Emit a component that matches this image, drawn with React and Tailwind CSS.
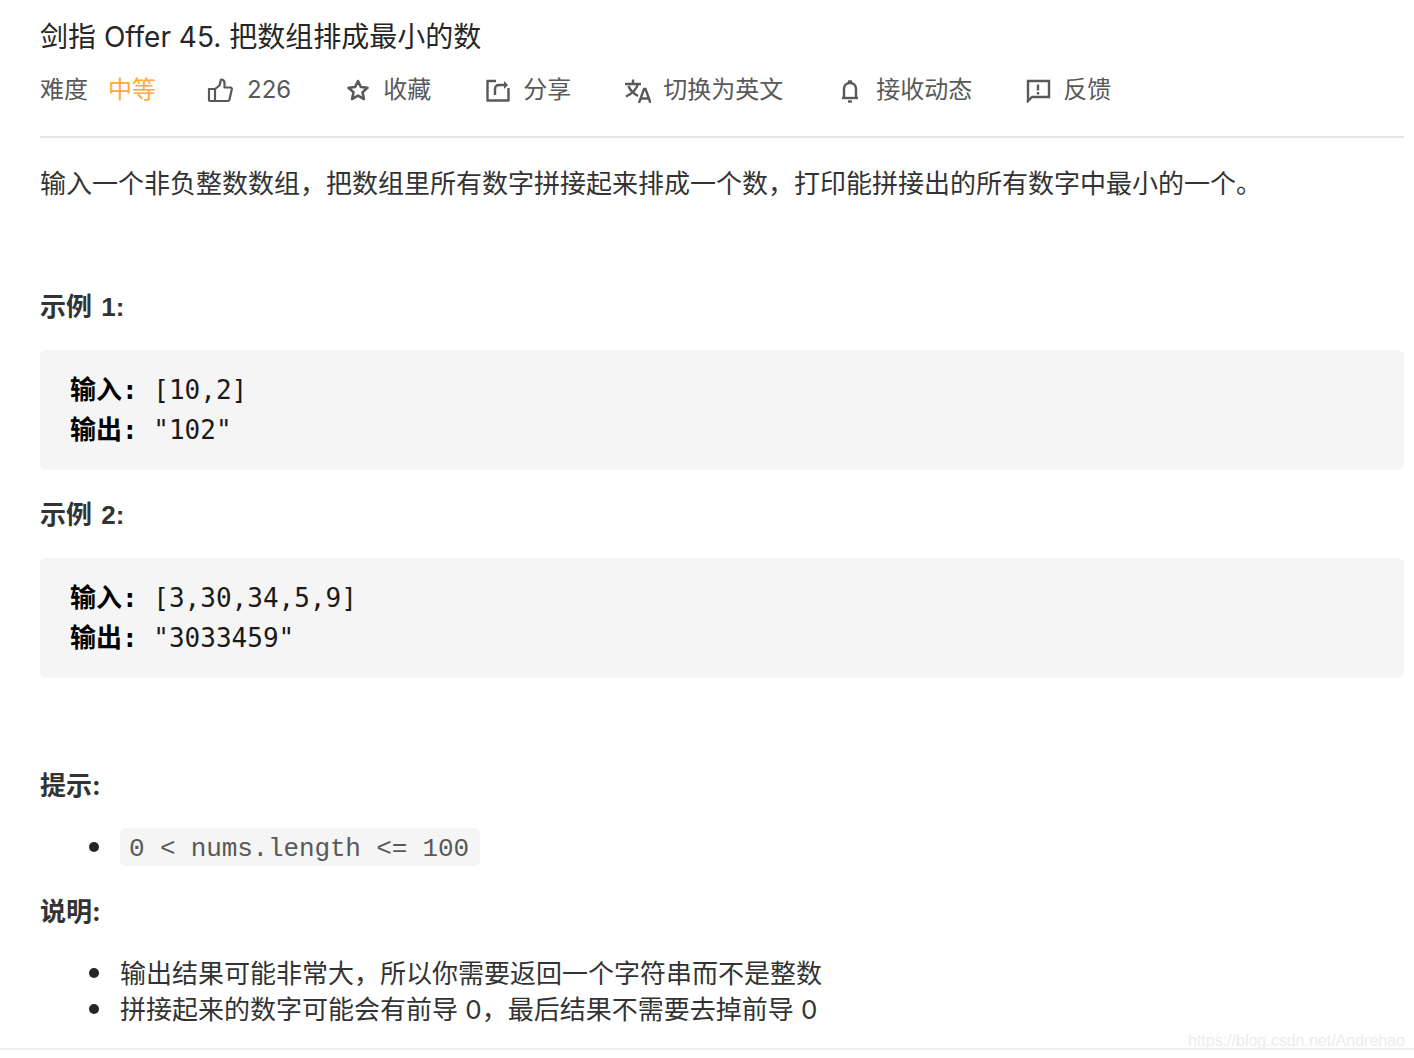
import React from 'react';

const ThumbIcon = () => (
  <svg width="26" height="26" viewBox="0 0 26 26" fill="none" stroke="#595959" strokeWidth="2.200" strokeLinejoin="round" strokeLinecap="round">
    <path d="M2 12h6v12H3a1 1 0 0 1-1-1z" />
    <path d="M8 12l4.500-3.500L14 2.500c2.200 0 3.500 1.500 3.500 3.500v4.500h6c1 0 1.500.8 1.300 1.800l-2.300 10.200c-.2 1-.9 1.500-1.800 1.500H8" />
  </svg>
);

const StarIcon = () => (
  <svg width="26" height="26" viewBox="0 0 26 26" fill="none" stroke="#595959" strokeWidth="2.600" strokeLinejoin="round">
    <path d="M13 4l2.800 6 6.700.8-5 4.500 1.400 6.700L13 18.700 7.100 22l1.400-6.700-5-4.500 6.700-.8z" />
  </svg>
);

const ShareIcon = () => (
  <svg width="26" height="26" viewBox="0 0 26 26" fill="none" stroke="#595959" strokeWidth="2.400" strokeLinejoin="round">
    <path d="M11 4H2.500v19.500h21V11" />
    <path d="M10 18v-6c0-2.500 1.500-4 4-4h6" />
    <path d="M19 4l4 4-4 4z" fill="#595959" stroke="none" />
  </svg>
);

const TranslateIcon = () => (
  <svg width="26" height="26" viewBox="0 0 26 26" fill="none" stroke="#595959" strokeWidth="2.400">
    <path d="M0 7h16M8 2.500V7M13 7c-1.500 5-5.500 9.500-12 12.500M3.500 9c1.500 4 5 7.500 9.500 10" />
    <path d="M14 26l5-14h1.500l5 14M16 21.500h9" />
  </svg>
);

const BellIcon = () => (
  <svg width="26" height="26" viewBox="0 0 26 26" fill="none" stroke="#595959" strokeWidth="2.400" strokeLinejoin="round">
    <path d="M7 20v-8c0-3.600 2.400-6 6-6s6 2.400 6 6v8" />
    <path d="M5 21h16" />
    <path d="M11 4.500h4" />
    <path d="M11 24.500h4" />
  </svg>
);

const FeedbackIcon = () => (
  <svg width="26" height="26" viewBox="0 0 26 26" fill="none" stroke="#595959" strokeWidth="2.400" strokeLinejoin="miter">
    <path d="M3 4h21v16H7l-4 4z" />
    <path d="M13 7.500v6M13 15v2.500" />
  </svg>
);

const MetaItem = ({ icon, label, className }) => (
  <div className={`flex items-center ${className}`}>
    {icon}
    <span>{label}</span>
  </div>
);

const CodeBlock = ({ input, output }) => (
  <div className="h-[120px] rounded-md bg-[#f5f5f5] pl-[30px] pt-[20px] text-[26px] text-[#1a1a1a] [font-family:'DejaVu_Sans_Mono','Noto_Sans_CJK_SC',monospace]">
    <div className="flex h-[40px] items-center whitespace-pre">
      <strong className="text-black">输入:</strong>
      <span> {input}</span>
    </div>
    <div className="flex h-[40px] items-center whitespace-pre">
      <strong className="text-black">输出:</strong>
      <span> {output}</span>
    </div>
  </div>
);

const Bullet = ({ children }) => (
  <li className="flex h-[36px] items-center">
    <span className="mr-[21px] ml-[49px] h-[10px] w-[10px] rounded-full bg-[#262626]" />
    {children}
  </li>
);

export default function App() {
  return (
    <div className="h-[1058px] w-[1414px] overflow-hidden bg-white text-[#333] [font-family:Inter,'Noto_Sans_CJK_SC',sans-serif]">
      <div className="pl-[40px] pr-[10px]">
        {/* Header */}
        <h1 className="flex h-[40px] items-center pt-[1px] mt-[16px] text-[28px] font-normal text-[#262626]">剑指 Offer 45. 把数组排成最小的数</h1>
        <div className="mt-[14px] flex h-[40px] items-center text-[24px] text-[#595959]">
          <span>难度</span>
          <span className="ml-[20px] text-[#ffa940]">中等</span>
          <MetaItem className="ml-[51px] gap-[14px]" icon={<ThumbIcon />} label="226" />
          <MetaItem className="ml-[54px] gap-[12px]" icon={<StarIcon />} label="收藏" />
          <MetaItem className="ml-[54px] gap-[12px]" icon={<ShareIcon />} label="分享" />
          <MetaItem className="ml-[54px] gap-[12px]" icon={<TranslateIcon />} label="切换为英文" />
          <MetaItem className="ml-[54px] gap-[13px]" icon={<BellIcon />} label="接收动态" />
          <MetaItem className="ml-[53px] gap-[12px]" icon={<FeedbackIcon />} label="反馈" />
        </div>
        <div className="mt-[26px] h-[2px] bg-[#e6e6e6]" />

        {/* Description */}
        <p className="mt-[24px] flex h-[42px] items-center text-[26px]">输入一个非负整数数组，把数组里所有数字拼接起来排成一个数，打印能拼接出的所有数字中最小的一个。</p>

        <p className="mt-[82px] flex h-[42px] items-center whitespace-pre text-[26px] font-bold [word-spacing:2px] [font-family:'Liberation_Sans','Noto_Sans_CJK_SC',sans-serif]">示例 1:</p>
        <div className="mt-[22px]">
          <CodeBlock input="[10,2]" output={'"102"'} />
        </div>
        <p className="mt-[24px] flex h-[42px] items-center whitespace-pre text-[26px] font-bold [word-spacing:2px] [font-family:'Liberation_Sans','Noto_Sans_CJK_SC',sans-serif]">示例 2:</p>
        <div className="mt-[22px]">
          <CodeBlock input="[3,30,34,5,9]" output={'"3033459"'} />
        </div>

        <p className="mt-[86px] flex h-[42px] items-center text-[26px] font-bold">提示:</p>
        <ul className="mt-[23px]">
          <Bullet>
            <code className="flex h-[38px] items-center rounded-md bg-[#f5f5f5] pl-[9px] pr-[11px] pt-[4px] text-[26px] tracking-[-0.15px] whitespace-pre text-[#595959] [font-family:'Liberation_Mono',monospace]">0 &lt; nums.length &lt;= 100</code>
          </Bullet>
        </ul>
        <p className="mt-[25px] flex h-[42px] items-center text-[26px] font-bold">说明:</p>
        <ul className="mt-[23px] text-[26px]">
          <Bullet>输出结果可能非常大，所以你需要返回一个字符串而不是整数</Bullet>
          <Bullet>拼接起来的数字可能会有前导 0，最后结果不需要去掉前导 0</Bullet>
        </ul>
      </div>
      <div className="relative mt-[21px] h-[2px] bg-[#f0f0f0]">
        <span className="absolute right-[9px] bottom-[-1px] text-[16px] leading-[20px] text-[#ececec] [font-family:'Liberation_Sans',sans-serif]">https://blog.csdn.net/Andrehao</span>
      </div>
    </div>
  );
}
